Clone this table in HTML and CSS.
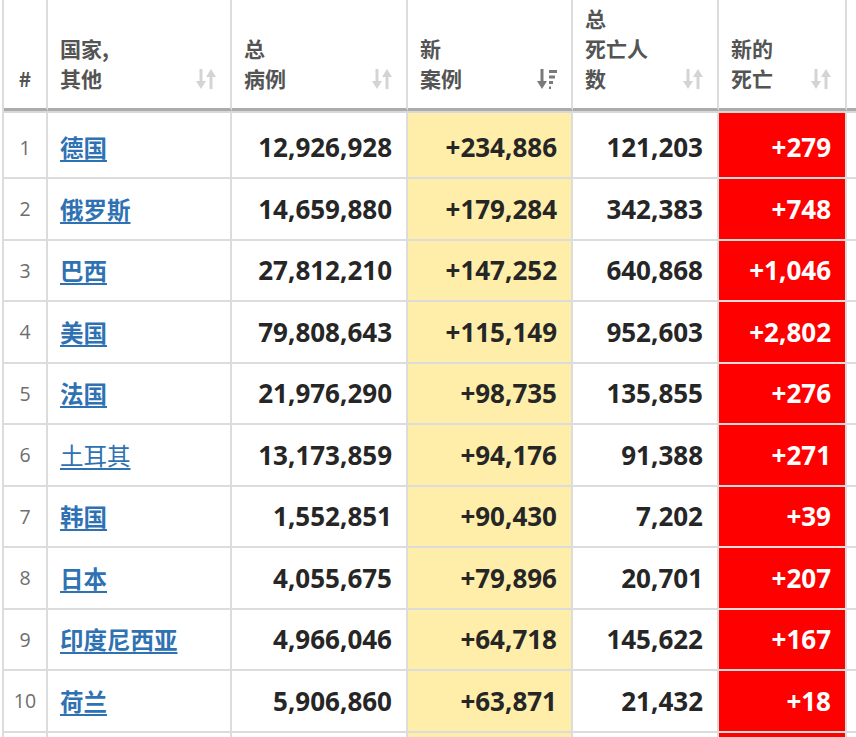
FILE: index.html
```html
<!DOCTYPE html>
<html lang="zh-CN">
<head>
<meta charset="utf-8">
<title>COVID-19 表格</title>
<link rel="stylesheet" href="styles.css">
</head>
<body>
<div class="wrap">
<table class="tbl">
<thead>
<tr>
<th class="w-rank"><div class="th-in th-center"><span class="th-txt">#</span></div></th>
<th class="w-country"><div class="th-in"><span class="th-txt">国家,<br>其他</span><svg class="sort" viewBox="0 0 20 22"><rect x="3.5" y="1" width="3" height="14"/><polygon points="0,13 10,13 5,21"/><rect x="13.5" y="7" width="3" height="14"/><polygon points="10,9 20,9 15,1"/></svg></div></th>
<th class="w-total"><div class="th-in"><span class="th-txt">总<br>病例</span><svg class="sort" viewBox="0 0 20 22"><rect x="3.5" y="1" width="3" height="14"/><polygon points="0,13 10,13 5,21"/><rect x="13.5" y="7" width="3" height="14"/><polygon points="10,9 20,9 15,1"/></svg></div></th>
<th class="w-new"><div class="th-in"><span class="th-txt">新<br>案例</span><svg class="sort sort-on" viewBox="0 0 20 22"><rect x="3.5" y="1" width="3" height="14"/><polygon points="0,13 10,13 5,21"/><rect x="12" y="2" width="8" height="3"/><rect x="12" y="7.5" width="6" height="3"/><rect x="12" y="13" width="4" height="3"/><rect x="12" y="18.5" width="2" height="2.5"/></svg></div></th>
<th class="w-deaths"><div class="th-in"><span class="th-txt">总<br>死亡人<br>数</span><svg class="sort" viewBox="0 0 20 22"><rect x="3.5" y="1" width="3" height="14"/><polygon points="0,13 10,13 5,21"/><rect x="13.5" y="7" width="3" height="14"/><polygon points="10,9 20,9 15,1"/></svg></div></th>
<th class="w-newd"><div class="th-in"><span class="th-txt">新的<br>死亡</span><svg class="sort" viewBox="0 0 20 22"><rect x="3.5" y="1" width="3" height="14"/><polygon points="0,13 10,13 5,21"/><rect x="13.5" y="7" width="3" height="14"/><polygon points="10,9 20,9 15,1"/></svg></div></th>
<th class="w-rec"></th>
</tr>
</thead>
<tbody>
<tr><td class="rank">1</td><td class="country"><a href="#">德国</a></td><td class="num">12,926,928</td><td class="num new">+234,886</td><td class="num">121,203</td><td class="num red">+279</td><td></td></tr>
<tr><td class="rank">2</td><td class="country"><a href="#">俄罗斯</a></td><td class="num">14,659,880</td><td class="num new">+179,284</td><td class="num">342,383</td><td class="num red">+748</td><td></td></tr>
<tr><td class="rank">3</td><td class="country"><a href="#">巴西</a></td><td class="num">27,812,210</td><td class="num new">+147,252</td><td class="num">640,868</td><td class="num red">+1,046</td><td></td></tr>
<tr><td class="rank">4</td><td class="country"><a href="#">美国</a></td><td class="num">79,808,643</td><td class="num new">+115,149</td><td class="num">952,603</td><td class="num red">+2,802</td><td></td></tr>
<tr><td class="rank">5</td><td class="country"><a href="#">法国</a></td><td class="num">21,976,290</td><td class="num new">+98,735</td><td class="num">135,855</td><td class="num red">+276</td><td></td></tr>
<tr><td class="rank">6</td><td class="country"><a class="thin" href="#">土耳其</a></td><td class="num">13,173,859</td><td class="num new">+94,176</td><td class="num">91,388</td><td class="num red">+271</td><td></td></tr>
<tr><td class="rank">7</td><td class="country"><a href="#">韩国</a></td><td class="num">1,552,851</td><td class="num new">+90,430</td><td class="num">7,202</td><td class="num red">+39</td><td></td></tr>
<tr><td class="rank">8</td><td class="country"><a href="#">日本</a></td><td class="num">4,055,675</td><td class="num new">+79,896</td><td class="num">20,701</td><td class="num red">+207</td><td></td></tr>
<tr><td class="rank">9</td><td class="country"><a href="#">印度尼西亚</a></td><td class="num">4,966,046</td><td class="num new">+64,718</td><td class="num">145,622</td><td class="num red">+167</td><td></td></tr>
<tr><td class="rank">10</td><td class="country"><a href="#">荷兰</a></td><td class="num">5,906,860</td><td class="num new">+63,871</td><td class="num">21,432</td><td class="num red">+18</td><td></td></tr>
<tr class="tail"><td class="rank"></td><td class="country"></td><td class="num"></td><td class="num new"></td><td class="num"></td><td class="num red"></td><td></td></tr>
</tbody>
</table>
</div>
</body>
</html>
```

FILE: styles.css
```css
html, body {
  margin: 0;
  padding: 0;
  background: #ffffff;
  overflow: hidden;
}

body {
  width: 856px;
  height: 737px;
  font-family: "Open Sans", "Noto Sans CJK SC", sans-serif;
}

.wrap {
  padding-left: 2px;
}

.tbl {
  border-collapse: separate;
  border-spacing: 0;
  table-layout: fixed;
  width: 965px;
  border-left: 2px solid #dcdcdc;
}

.tbl th,
.tbl td {
  box-sizing: border-box;
  border-right: 2px solid #dcdcdc;
  padding: 0;
}

.w-rank { width: 44px; }
.w-country { width: 184px; }
.w-total { width: 176px; }
.w-new { width: 165px; }
.w-deaths { width: 146px; }
.w-newd { width: 128px; }
.w-rec { width: 120px; }

.tbl th {
  height: 111px;
  vertical-align: bottom;
  text-align: left;
  border-bottom: 3px solid #ababab;
  font-family: "Noto Sans CJK SC", "Open Sans", sans-serif;
  font-weight: 700;
  font-size: 21px;
  line-height: 30px;
  color: #545454;
}

.th-in {
  display: flex;
  justify-content: space-between;
  align-items: flex-end;
  padding: 0 14px 15px 12px;
}

.th-center {
  justify-content: center;
  padding: 0 0 15px 0;
}

.th-txt {
  display: block;
}

.sort {
  width: 20px;
  height: 22px;
  margin-bottom: 3px;
  fill: #d4d4d4;
  flex-shrink: 0;
}

.sort-on {
  fill: #7a7a7a;
}

.tbl tbody td {
  height: 61.5px;
  border-bottom: 2px solid #dcdcdc;
  vertical-align: middle;
}

.tbl tbody tr:first-child td {
  height: 68px;
  padding-top: 4px;
  border-top: 2px solid #d8d8d8;
}

.rank {
  text-align: center;
  font-size: 19.5px;
  color: #6e6e6e;
}

.country {
  padding-left: 12px !important;
  font-family: "Noto Sans CJK SC", sans-serif;
  font-size: 23.5px;
}

.country a {
  color: #2f72b3;
  font-weight: 700;
  text-decoration: underline;
  text-decoration-thickness: 2px;
  text-underline-offset: 3px;
}

.country a.thin {
  font-weight: 400;
}

.num {
  text-align: right;
  padding-right: 14px !important;
  font-family: "Open Sans", sans-serif;
  font-weight: 700;
  font-size: 26px;
  color: #262626;
  white-space: nowrap;
}

.new {
  background: #ffeeaa;
}

.red {
  background: #ff0000;
  color: #ffffff;
}
```
